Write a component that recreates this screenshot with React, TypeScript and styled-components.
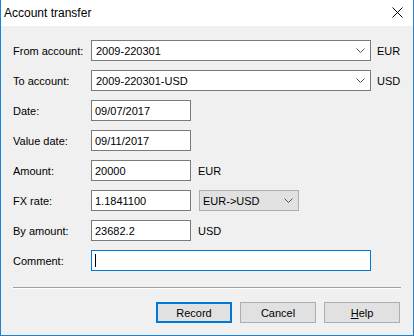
import { createGlobalStyle, styled } from 'styled-components';

const GlobalStyle = createGlobalStyle`
  body {
    margin: 0;
    font-family: 'Liberation Sans', Arial, sans-serif;
    font-size: 11px;
    color: #000;
  }
`;

const Chevron = () => (
  <svg width='9' height='5' viewBox='0 0 9 5'>
    <path d='M0.5 0.5 L4.5 4.5 L8.5 0.5' fill='none' stroke='#555' strokeWidth='1' />
  </svg>
);

const App = () => {
  return (
    <>
      <GlobalStyle />
      <Window>
        <TitleBar>
          <span>Account transfer</span>
          <Close>
            <svg width='11' height='11' viewBox='0 0 11 11'>
              <path d='M0.5 0.5 L10.5 10.5 M10.5 0.5 L0.5 10.5' stroke='#000' strokeWidth='1' />
            </svg>
          </Close>
        </TitleBar>
        <Content>
          <Form>
            <Label>From account:</Label>
            <Field>
              <Combo $width={280}>
                <span>2009-220301</span>
                <Chevron />
              </Combo>
              <Suffix $gap={6}>EUR</Suffix>
            </Field>

            <Label>To account:</Label>
            <Field>
              <Combo $width={280}>
                <span>2009-220301-USD</span>
                <Chevron />
              </Combo>
              <Suffix $gap={6}>USD</Suffix>
            </Field>

            <Label>Date:</Label>
            <Field>
              <TextBox $width={100}>09/07/2017</TextBox>
            </Field>

            <Label>Value date:</Label>
            <Field>
              <TextBox $width={100}>09/11/2017</TextBox>
            </Field>

            <Label>Amount:</Label>
            <Field>
              <TextBox $width={100}>20000</TextBox>
              <Suffix $gap={7}>EUR</Suffix>
            </Field>

            <Label>FX rate:</Label>
            <Field>
              <TextBox $width={100}>1.1841100</TextBox>
              <Select>
                <span>EUR-&gt;USD</span>
                <Chevron />
              </Select>
            </Field>

            <Label>By amount:</Label>
            <Field>
              <TextBox $width={100}>23682.2</TextBox>
              <Suffix $gap={7}>USD</Suffix>
            </Field>

            <Label>Comment:</Label>
            <Field>
              <TextBox $width={280} $focused>
                <Caret />
              </TextBox>
            </Field>
          </Form>

          <Separator />

          <Buttons>
            <Button $default>Record</Button>
            <Button>Cancel</Button>
            <Button>
              <u>H</u>elp
            </Button>
          </Buttons>
        </Content>
      </Window>
    </>
  );
};

export default App;

const Window = styled.div`
  width: 414px;
  height: 336px;
  box-sizing: border-box;
  border: 1px solid #1883d7;
  border-top: none;
  background: #f0f0f0;
  display: flex;
  flex-direction: column;
`;

const TitleBar = styled.div`
  height: 25px;
  background: #fff;
  display: flex;
  align-items: center;
  justify-content: space-between;
  padding: 0 10px 1px 3px;
  font-size: 12px;
  color: #000;
`;

const Close = styled.div`
  display: flex;
  margin-top: 0;
`;

const Content = styled.div`
  padding: 14px 12px 0 12px;
  display: flex;
  flex-direction: column;
`;

const Form = styled.div`
  display: grid;
  grid-template-columns: 78px 1fr;
  grid-auto-rows: 21px;
  row-gap: 9px;
`;

const Label = styled.div`
  display: flex;
  align-items: center;
`;

const Field = styled.div`
  display: flex;
  align-items: center;
`;

const Combo = styled.div<{ $width: number }>`
  width: ${(p) => p.$width}px;
  height: 21px;
  box-sizing: border-box;
  border: 1px solid #7a7a7a;
  background: #fff;
  display: flex;
  align-items: center;
  justify-content: space-between;
  padding: 0 5px 0 4px;
`;

const Select = styled.div`
  width: 100px;
  height: 21px;
  margin-left: 8px;
  box-sizing: border-box;
  border: 1px solid #adadad;
  background: #e1e1e1;
  display: flex;
  align-items: center;
  justify-content: space-between;
  padding: 0 5px 0 3px;
`;

const TextBox = styled.div<{ $width: number; $focused?: boolean }>`
  width: ${(p) => p.$width}px;
  height: 21px;
  box-sizing: border-box;
  border: 1px solid ${(p) => (p.$focused ? '#0078d7' : '#7a7a7a')};
  background: #fff;
  display: flex;
  align-items: center;
  padding: 0 3px;
`;

const Caret = styled.span`
  width: 1px;
  height: 13px;
  background: #000;
`;

const Suffix = styled.span<{ $gap: number }>`
  margin-left: ${(p) => p.$gap}px;
`;

const Separator = styled.div`
  margin-top: 16px;
  border-top: 1px solid #a0a0a0;
  border-bottom: 1px solid #fff;
`;

const Buttons = styled.div`
  margin-top: 13px;
  padding-right: 1px;
  display: flex;
  justify-content: flex-end;
  gap: 8px;
`;

const Button = styled.div<{ $default?: boolean }>`
  width: 76px;
  height: 21px;
  box-sizing: border-box;
  border: ${(p) => (p.$default ? '2px solid #0078d7' : '1px solid #adadad')};
  background: #e1e1e1;
  display: flex;
  align-items: center;
  justify-content: center;
`;
